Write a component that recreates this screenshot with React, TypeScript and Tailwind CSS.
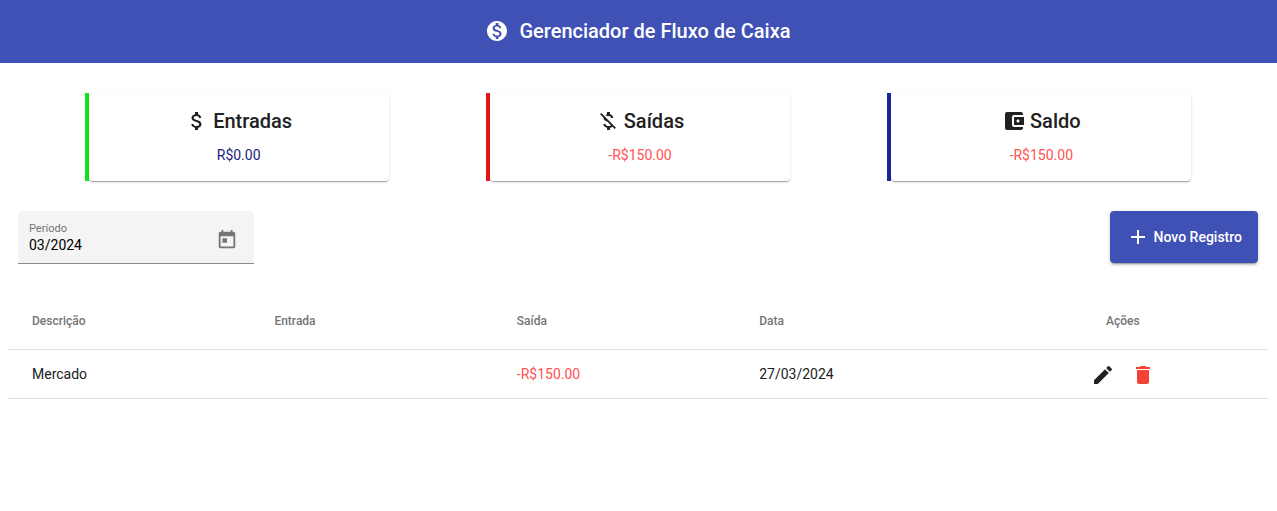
import { useState } from "react";
import type { IconType } from "react-icons";
import {
  MdAccountBalanceWallet,
  MdAdd,
  MdAttachMoney,
  MdDelete,
  MdEdit,
  MdMoneyOff,
  MdMonetizationOn,
  MdToday,
} from "react-icons/md";

type SummaryProps = {
  title: string;
  value: string;
  icon: IconType;
  accent: string;
  valueColor: string;
};

function SummaryCard({ title, value, icon: Icon, accent, valueColor }: SummaryProps) {
  return (
    <section className={`w-[304px] border-l-4 ${accent}`}>
      <div className="flex flex-col items-center rounded bg-white px-4 pt-4 pb-4 shadow-[0_2px_1px_-1px_rgba(0,0,0,0.2),0_1px_1px_0_rgba(0,0,0,0.14),0_1px_3px_0_rgba(0,0,0,0.12)]">
        <h2 className="flex items-center gap-1 text-xl leading-6 font-medium">
          <Icon className="size-6" aria-hidden="true" />
          {title}
        </h2>
        <p className={`mt-3 text-sm leading-5 ${valueColor}`}>{value}</p>
      </div>
    </section>
  );
}

const records = [
  { description: "Mercado", income: "", expense: "-R$150.00", date: "27/03/2024" },
];

export default function App() {
  const [period, setPeriod] = useState("03/2024");

  return (
    <div className="min-h-screen bg-white font-[Roboto,sans-serif] text-[#212121]">
      <header className="flex h-[63px] items-center justify-center gap-2.5 bg-[#3f51b5] pr-px pb-0.5 text-white">
        <MdMonetizationOn className="size-6" aria-hidden="true" />
        <h1 className="text-xl font-medium">Gerenciador de Fluxo de Caixa</h1>
      </header>

      <main className="pr-px">
        <div className="flex justify-around px-9 pt-[30px]">
          <SummaryCard title="Entradas" value="R$0.00" icon={MdAttachMoney} accent="border-[#0be81e]" valueColor="text-[#1a237e]" />
          <SummaryCard title="Saídas" value="-R$150.00" icon={MdMoneyOff} accent="border-[#e61717]" valueColor="text-[#ff5252]" />
          <SummaryCard title="Saldo" value="-R$150.00" icon={MdAccountBalanceWallet} accent="border-[#17259b]" valueColor="text-[#ff5252]" />
        </div>

        <div className="flex items-start justify-between px-[18px] pt-[30px]">
          <div className="flex h-[53px] w-[236px] items-center justify-between rounded-t border-b border-[#8a8a8a] bg-[#f4f4f4] pr-4 pl-[11px]">
            <div className="flex flex-col">
              <label htmlFor="period" className="text-[11px] leading-4 text-[#757575]">
                Período
              </label>
              <input
                id="period"
                type="text"
                value={period}
                onChange={(e) => setPeriod(e.target.value)}
                className="w-40 bg-transparent text-sm leading-4 text-black outline-none"
              />
            </div>
            <button type="button" aria-label="Abrir calendário" className="flex pt-1.5 text-[#757575]">
              <MdToday className="size-[22px]" />
            </button>
          </div>
          <button
            type="button"
            className="flex h-[52px] items-center gap-1 rounded bg-[#3f51b5] px-4 text-sm font-medium text-white shadow-[0_3px_1px_-2px_rgba(0,0,0,0.2),0_2px_2px_0_rgba(0,0,0,0.14),0_1px_5px_0_rgba(0,0,0,0.12)]"
          >
            <MdAdd className="size-6" aria-hidden="true" />
            Novo Registro
          </button>
        </div>

        <div className="px-2 pt-[29px]">
          <table className="block w-full text-left text-sm">
            <thead className="block">
              <tr className="flex h-[57px] items-center border-b border-[#e0e0e0] px-6 text-xs text-[#757575]">
                <th className="flex-1 font-medium">Descrição</th>
                <th className="flex-1 font-medium">Entrada</th>
                <th className="flex-1 font-medium">Saída</th>
                <th className="flex-1 font-medium">Data</th>
                <th className="flex-1 text-center font-medium">Ações</th>
              </tr>
            </thead>
            <tbody className="block">
              {records.map((record) => (
                <tr key={record.description} className="flex h-[49px] items-center border-b border-[#e0e0e0] px-6">
                  <td className="flex-1">{record.description}</td>
                  <td className="flex-1">{record.income}</td>
                  <td className="flex-1 text-[#ff5252]">{record.expense}</td>
                  <td className="flex-1">{record.date}</td>
                  <td className="flex flex-1 justify-center gap-4 pt-0.5">
                    <button type="button" aria-label="Editar">
                      <MdEdit className="size-6" />
                    </button>
                    <button type="button" aria-label="Excluir" className="text-[#f44336]">
                      <MdDelete className="size-6" />
                    </button>
                  </td>
                </tr>
              ))}
            </tbody>
          </table>
        </div>
      </main>
    </div>
  );
}
